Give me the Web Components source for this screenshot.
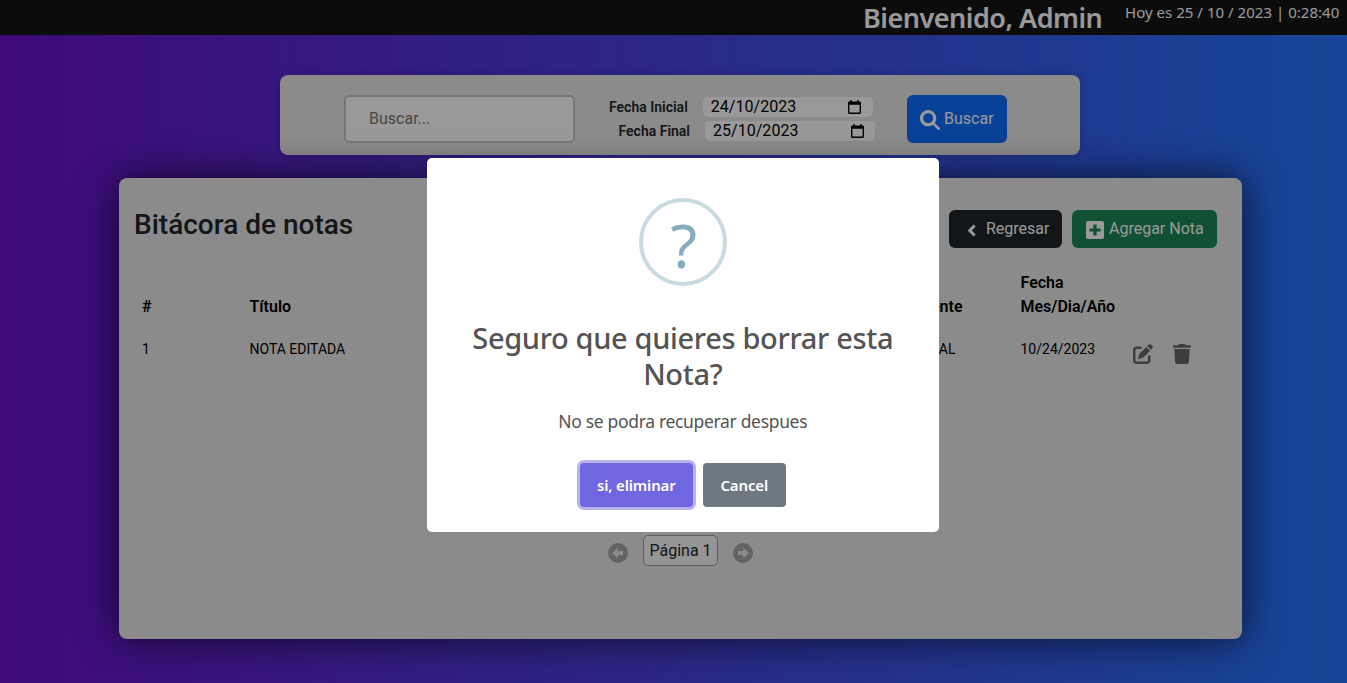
<!DOCTYPE html>
<html lang="es">
<head>
<meta charset="utf-8">
<title>Bitácora de notas</title>
<style>
html,body{margin:0;height:100%;overflow:hidden}
body{font:16px/24px Roboto,sans-serif;color:#212529}
</style>
</head>
<body>
<notes-app></notes-app>
<script>
const define=(name,html)=>{
  const t=document.createElement('template');t.innerHTML=html;
  customElements.define(name,class extends HTMLElement{
    constructor(){super();this.attachShadow({mode:'open'}).append(t.content.cloneNode(true));}
  });
};
const ICONS={
 search:['0 0 512 512','M416 208c0 45.9-14.9 88.3-40 122.7L502.6 457.4c12.5 12.5 12.5 32.8 0 45.3s-32.8 12.5-45.3 0L330.7 376c-34.4 25.2-76.8 40-122.7 40C93.1 416 0 322.9 0 208S93.1 0 208 0S416 93.1 416 208zM208 336a128 128 0 1 0 0-256 128 128 0 1 0 0 256z'],
 edit:['0 0 512 512','M471.6 21.7c-21.9-21.9-57.3-21.9-79.2 0L362.3 51.7l97.9 97.9 30.1-30.1c21.9-21.9 21.9-57.3 0-79.2L471.6 21.7zm-299.2 220c-6.1 6.1-10.8 13.6-13.5 21.9l-29.6 88.8c-2.9 8.6-.6 18.1 5.8 24.6s15.9 8.7 24.6 5.8l88.8-29.6c8.2-2.7 15.7-7.4 21.9-13.5L437.7 172.3 339.7 74.3 172.4 241.7zM96 64C43 64 0 107 0 160V416c0 53 43 96 96 96H352c53 0 96-43 96-96V320c0-17.7-14.3-32-32-32s-32 14.3-32 32v96c0 17.7-14.3 32-32 32H96c-17.7 0-32-14.3-32-32V160c0-17.7 14.3-32 32-32h96c17.7 0 32-14.3 32-32s-14.3-32-32-32H96z'],
 trash:['0 0 448 512','M135.2 17.7L128 32H32C14.3 32 0 46.3 0 64S14.3 96 32 96H416c17.7 0 32-14.3 32-32s-14.3-32-32-32H320l-7.2-14.3C307.4 6.8 296.3 0 284.2 0H163.8c-12.1 0-23.2 6.8-28.6 17.7zM416 128H32L53.2 467c1.6 25.3 22.6 45 47.9 45H346.9c25.3 0 46.3-19.7 47.9-45L416 128z'],
 back:['0 0 9 13','M8.7 2.6L4.9 6.5l3.8 3.9-2.1 2.1L.6 6.500 6.6.5z'],
 plus:['0 0 18 18','M2 0H16Q18 0 18 2V16Q18 18 16 18H2Q0 18 0 16V2Q0 0 2 0ZM7.4 3.4V7.4H3.4V10.6H7.4V14.6H10.6V10.6H14.6V7.4H10.6V3.4Z'],
 prev:['0 0 20 20','M10 0a10 10 0 1 0 0 20a10 10 0 1 0 0-20ZM4.2 10L9.8 4.5V8H15V12H9.8V15.5Z'],
 next:['0 0 20 20','M10 0a10 10 0 1 0 0 20a10 10 0 1 0 0-20ZM15.8 10L10.2 4.5V8H5V12H10.2V15.5Z'],
 calendar:['0 0 14 15','M2.5 0H4V1.5H10V0H11.5V1.5H12.5Q14 1.5 14 3V13.5Q14 15 12.5 15H1.5Q0 15 0 13.5V3Q0 1.5 1.5 1.5H2.5ZM1.5 5V13.5H12.5V5Z']
};
customElements.define('app-icon',class extends HTMLElement{
  constructor(){super();this.attachShadow({mode:'open'});}
  connectedCallback(){
    const [box,d]=ICONS[this.getAttribute('name')];
    this.shadowRoot.innerHTML=`<style>:host{display:inline-block;flex:none}svg{display:block;width:100%;height:100%}</style><svg viewBox="${box}" preserveAspectRatio="none" fill="currentColor" fill-rule="evenodd"><path d="${d}"/></svg>`;
  }
});
define('top-bar',`<style>
:host{display:flex;justify-content:flex-end;height:35px;background:#151515;color:#fff;font-family:"Noto Sans",sans-serif;box-sizing:border-box;padding-right:7px;white-space:nowrap}
h3{margin:1px 22px 0 0;font-size:27px;line-height:34px;font-weight:600;width:240px;letter-spacing:-.5px}
span{font-size:15px;line-height:24px;width:215px;letter-spacing:.03px}
</style><h3><slot name="welcome"></slot></h3><span><slot name="clock"></slot></span>`);
define('date-row',`<style>
:host{display:flex;align-items:center;height:24px}
b{font-size:14px;font-weight:600}
div{display:flex;align-items:center;justify-content:space-between;width:170px;height:20px;border-radius:5px;background:#fff;color:#000;margin-left:15px;box-sizing:border-box;padding:0 11.500px 0 8px}
app-icon{width:13px;height:14px}
span{letter-spacing:.03px;line-height:20px}
</style><b><slot name="label"></slot></b><div><span><slot></slot></span><app-icon name="calendar"></app-icon></div>`);
define('search-panel',`<style>
:host{display:flex;box-sizing:border-box;width:800px;height:80px;margin:40px 0 0 280px;border-radius:8px;background:#e8e8e8;padding:20px 73px 12px 64px;box-shadow:0 0 8px rgba(0,0,0,.2)}
.q{box-sizing:border-box;width:231px;height:48px;border:2px solid #c8c8c8;border-radius:5px;background:#fff;color:#757575;padding:0 23px;line-height:43px}
.d{width:266px;margin-left:34px}
.d date-row:last-child{margin-left:9.500px}
button{display:flex;align-items:center;gap:4px;box-sizing:border-box;width:100px;height:48px;border:0;border-radius:6px;background:#0d6efd;color:#fff;font:16px Roboto,sans-serif;padding:0 0 2px 13px;margin-left:32px}
app-icon{width:20px;height:20px;margin-top:4px}
</style><div class="q">Buscar...</div><div class="d"><date-row><span slot="label">Fecha Inicial</span>24/10/2023</date-row><date-row><span slot="label">Fecha Final</span>25/10/2023</date-row></div><button><app-icon name="search"></app-icon>Buscar</button>`);
define('notes-table',`<style>
:host{display:block;height:254px;border-bottom:1px solid #e3e5e7}
.r{display:grid;grid-template-columns:107.500px 500px 271px 112px 40px 40px;padding-left:8px;color:#000}
.h{font-weight:600;align-items:end;height:58px;border-bottom:1px solid #e3e5e7;box-sizing:border-box;padding-bottom:8px}
.b{font-size:14px;line-height:21px;padding-top:11px}
.e{text-align:right;padding-right:58px}
.g{padding-right:65px}
app-icon{color:#666;height:20px;width:20px;margin-top:5px;margin-left:.5px}
app-icon[name=trash]{width:18px}
</style><div class="r h"><span>#</span><span>Título</span><span class="e">Cliente</span><span>Fecha Mes/Dia/Año</span></div>
<div class="r b"><span>1</span><span>NOTA EDITADA</span><span class="e g">LEGAL</span><span>10/24/2023</span><app-icon name="edit"></app-icon><app-icon name="trash"></app-icon></div>`);
define('page-nav',`<style>
:host{display:flex;justify-content:center;align-items:center;gap:15px;margin-top:10px;height:33px}
app-icon{color:#a6a6a6;width:20px;height:20px;margin-top:3px}
span{box-sizing:border-box;height:31px;width:75px;border:1px solid #9a9a9a;border-radius:5px;background:#f8f8f8;line-height:29px;text-align:center;margin-top:-2px}
</style><app-icon name="prev"></app-icon><span><slot></slot></span><app-icon name="next"></app-icon>`);
define('notes-card',`<style>
:host{display:block;position:relative;box-sizing:border-box;width:1123px;height:461px;margin:23px 0 0 119px;padding:32px 15px 0;border-radius:8px;background:#e8e8e8;box-shadow:0 0 40px rgba(0,0,0,.7)}
header{display:flex;height:60px;padding-right:10px;gap:10px}
h3{margin:-2px auto 0 0;font-size:28px;line-height:34px;font-weight:500}
button{display:flex;align-items:center;box-sizing:border-box;height:38px;border:0;border-radius:6px;color:#fff;font:16px Roboto,sans-serif;padding:0 0 2px}
.k{background:#212529;width:113px;padding-left:18px;gap:10px}
.g{background:#198754;width:145px;padding-left:14px;gap:5px}
.k app-icon{width:9px;height:13px;margin-top:4px}
.g app-icon{width:18px;height:18px;margin-top:4px}
</style><header><h3>Bitácora de notas</h3><button class="k"><app-icon name="back"></app-icon>Regresar</button><button class="g"><app-icon name="plus"></app-icon>Agregar Nota</button></header><notes-table></notes-table><page-nav>Página 1</page-nav>`);
define('confirm-dialog',`<style>
:host{position:fixed;inset:0;display:flex;justify-content:center;align-items:flex-start;background:rgba(0,0,0,.4);font-family:"Noto Sans",sans-serif}
section{box-sizing:border-box;width:512px;height:374px;margin:158px 0 0 18.500px;background:#fff;border-radius:5px;display:flex;flex-direction:column;align-items:center;padding-top:40px}
.i{box-sizing:border-box;width:88px;height:88px;border:4px solid #c9dae1;border-radius:50%;color:#87adbd;font-size:61px;line-height:85px;text-align:center;padding-left:2px}
h2{margin:34px 0 0;font-size:29px;line-height:36px;font-weight:500;color:#545454;text-align:center;width:440px;white-space:nowrap;letter-spacing:-.34px}
p{margin:16px 0 0;font-size:17.500px;line-height:26px;color:#545454;white-space:nowrap;letter-spacing:-.33px}
div.a{display:flex;gap:10px;margin-top:29px}
button{height:44px;border:0;border-radius:4px;color:#fff;font:600 15px "Noto Sans",sans-serif;letter-spacing:-.15px;padding:0;background:#6e7881;width:83px;white-space:nowrap}
button.y{background:#7066e0;width:113px;box-shadow:0 0 0 3px #b7b2ef}
</style><section><div class="i">?</div><h2><slot name="title"></slot></h2><p><slot></slot></p><div class="a"><button class="y">si, eliminar</button><button>Cancel</button></div></section>`);
define('notes-app',`<style>:host{display:block;height:100vh;background:linear-gradient(to right,#6a11cb,#2575fc);overflow:hidden}</style>
<top-bar><span slot="welcome">Bienvenido, Admin</span><span slot="clock">Hoy es 25 / 10 / 2023 | 0:28:40</span></top-bar>
<search-panel></search-panel>
<notes-card></notes-card>
<confirm-dialog><span slot="title">Seguro que quieres borrar esta<br>Nota?</span>No se podra recuperar despues</confirm-dialog>`);
</script>
</body>
</html>
